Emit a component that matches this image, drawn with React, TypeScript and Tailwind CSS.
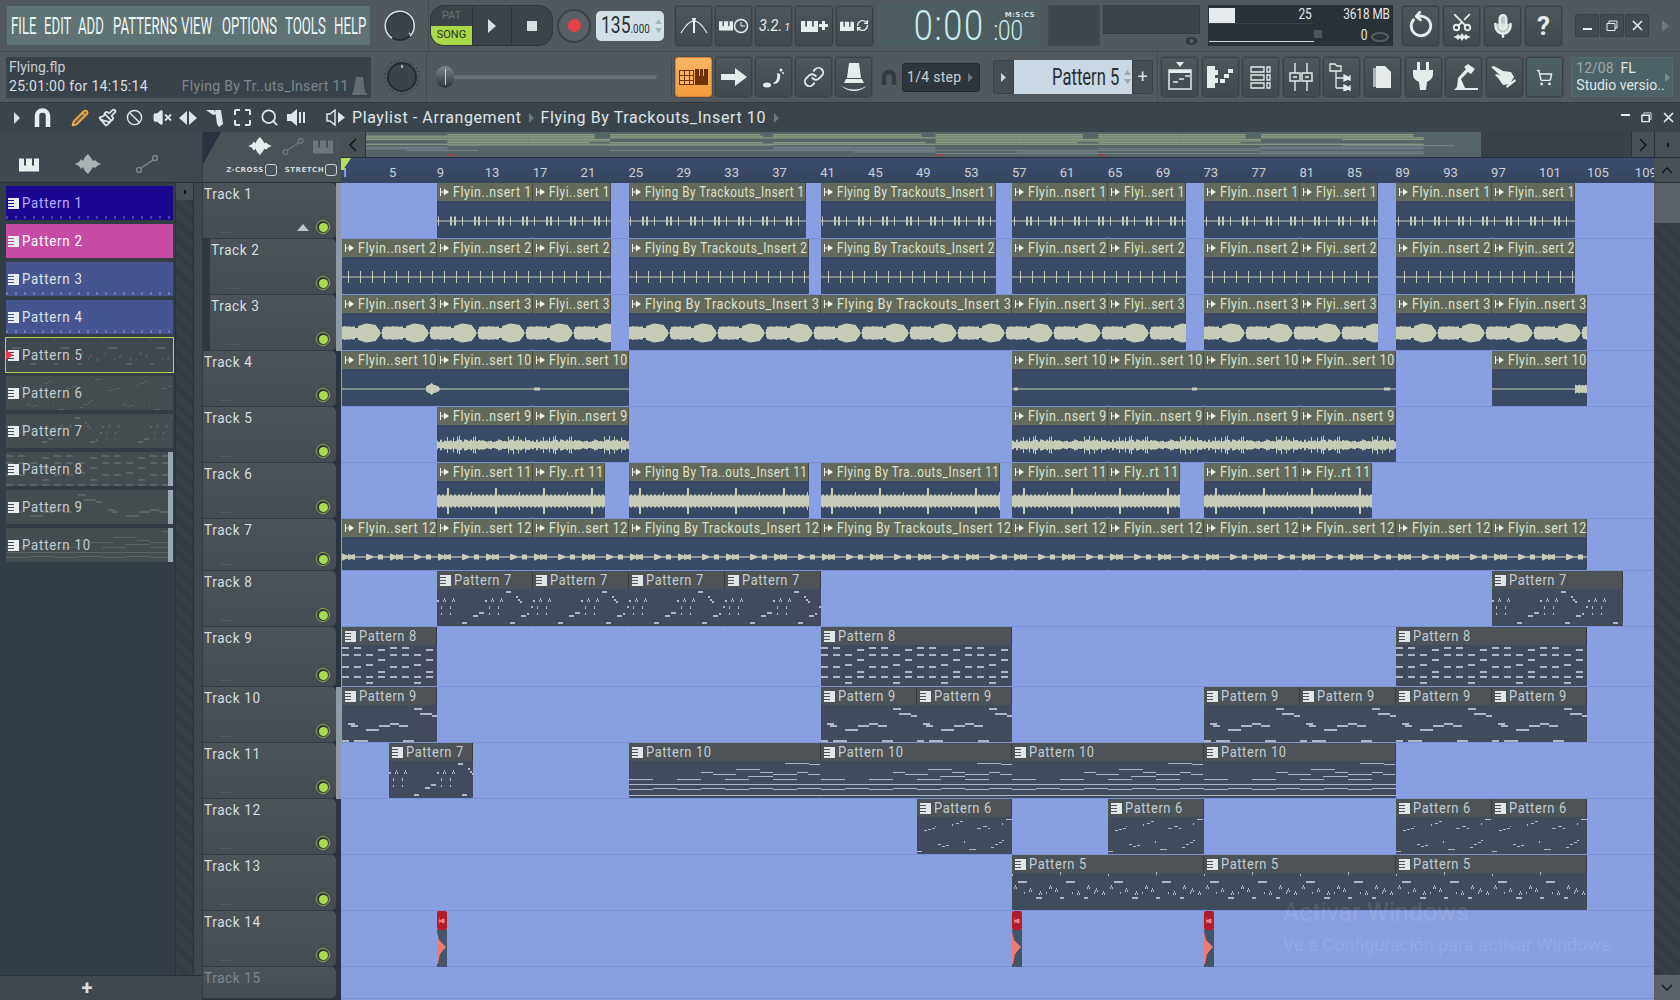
import React from "react";
import { Ban, Link, Mic, Paintbrush, Pencil, RefreshCw, RotateCcw, Scissors, Search, ShoppingCart, VolumeX } from "lucide-react";

const BAR = 11.98;

type Clip = [number, number, string];
const a = (label: string, ...spans: number[][]): Clip[] => spans.map(([s, e]) => [s, e, label] as Clip);

const n1 = "Flyin..nsert 1", s1 = "Flyi..sert 1";
const n2 = "Flyin..nsert 2", s2 = "Flyi..sert 2";
const n3 = "Flyin..nsert 3", s3 = "Flyi..sert 3";
const n10 = "Flyin..sert 10", n9 = "Flyin..nsert 9", n11 = "Flyin..sert 11", f11 = "Fly..rt 11", n12 = "Flyin..sert 12";

const audioRows: Clip[][] = [
  [...a(n1, [8, 16]), ...a(s1, [16, 22.5]), ...a("Flying By Trackouts_Insert 1", [24, 38.75], [40, 54.6]), ...a(n1, [56, 64]), ...a(s1, [64, 70.5]), ...a(n1, [72, 80]), ...a(s1, [80, 86.5]), ...a(n1, [88, 96]), ...a("Flyin..sert 1", [96, 103])],
  [...a(n2, [0, 8], [8, 16]), ...a(s2, [16, 22.5]), ...a("Flying By Trackouts_Insert 2", [24, 39], [40, 54.6]), ...a(n2, [56, 64]), ...a(s2, [64, 70.5]), ...a(n2, [72, 80]), ...a(s2, [80, 86.5]), ...a(n2, [88, 96]), ...a("Flyin..sert 2", [96, 103])],
  [...a(n3, [0, 8], [8, 16]), ...a(s3, [16, 22.5]), ...a("Flying By Trackouts_Insert 3", [24, 40], [40, 56]), ...a(n3, [56, 64]), ...a(s3, [64, 70.5]), ...a(n3, [72, 80]), ...a(s3, [80, 86.5]), ...a(n3, [88, 96], [96, 104])],
  a(n10, [0, 8], [8, 16], [16, 24], [56, 64], [64, 72], [72, 80], [80, 88], [96, 104]),
  a(n9, [8, 16], [16, 24], [56, 64], [64, 72], [72, 80], [80, 88]),
  [...a(n11, [8, 16]), ...a(f11, [16, 22]), ...a("Flying By Tra..outs_Insert 11", [24, 39], [40, 55]), ...a(n11, [56, 64]), ...a(f11, [64, 70]), ...a(n11, [72, 80]), ...a(f11, [80, 86])],
  [...a(n12, [0, 8], [8, 16], [16, 24]), ...a("Flying By Trackouts_Insert 12", [24, 40], [40, 56]), ...a(n12, [56, 64], [64, 72], [72, 80], [80, 88], [88, 96], [96, 104])],
];

const patternRows: Clip[][] = [
  a("Pattern 7", [8, 16], [16, 24], [24, 32], [32, 40], [96, 107]),
  a("Pattern 8", [0, 8], [40, 56], [88, 104]),
  a("Pattern 9", [0, 8], [40, 48], [48, 56], [72, 80], [80, 88], [88, 96], [96, 104]),
  [...a("Pattern 7", [4, 11]), ...a("Pattern 10", [24, 40], [40, 56], [56, 72], [72, 88])],
  a("Pattern 6", [48, 56], [64, 72], [88, 96], [96, 104]),
  a("Pattern 5", [56, 72], [72, 88], [88, 104]),
];

const rowHeights = [56, 56, 56, 56, 56, 56, 52, 56, 60, 56, 56, 56, 56, 56, 32];

// FL squeezes the clip title to fit the clip
const ctx = document.createElement("canvas").getContext("2d");
const fitScale = (text: string, clipW: number) => {
  if (!ctx) return 0.8;
  ctx.font = "15px Roboto";
  const natural = ctx.measureText(text).width + text.length * 0.7;
  return Math.min(0.86, (clipW - 17) / natural);
};

// noise that stays the same between renders
const noise = (i: number) => {
  const v = Math.sin(i * 12.9898) * 43758.5453;
  return v - Math.floor(v);
};

const amp = (track: number, x: number): number => {
  const m = (t: number) => ((x % t) + t) % t;
  switch (track) {
    case 0: {
      const t = m(24);
      if (t < 1 || (t >= 12 && t < 14) || (t >= 16 && t < 18)) return 4.5;
      return 0.5;
    }
    case 1: {
      const t = m(12);
      return t >= 6 && t < 7 ? 6 : 0.5;
    }
    case 2: {
      const t = m(48) - 14;
      const p = t < 0 ? t + 48 : t;
      if (p < 24) return p < 2 ? 5 : p < 10 ? 7 + (p - 2) * 0.35 : p < 19 ? 9.5 - (p - 10) * 0.15 : 8 - (p - 19) * 1.3;
      if (p < 25.5) return 0.6;
      return p < 27 ? 4 : p > 46 ? 5 : 6 + noise(Math.floor(p)) * 0.8;
    }
    case 3: {
      if (x >= 84 && x < 99) return Math.max(0.5, 5 - Math.abs(x - 89) * 0.5 + noise(x));
      if ((x >= 192 && x < 198) || (x >= 1042 && x < 1048) || (x >= 850 && x < 855) || (x >= 672 && x < 676)) return 1.5;
      if (x >= 1233 && x < 1246) return 3.5 + noise(x);
      return 0.5;
    }
    case 4: {
      const t = m(96);
      return 3 + noise(Math.floor(t / 2)) * 2.5 + (noise(t + 300) > 0.9 ? 4 : 0);
    }
    case 5: {
      const t = m(48);
      if (t >= 9 && t < 11) return 13;
      if (t >= 33 && t < 34) return 9;
      return m(4) < 2 ? 6.5 : 5.5;
    }
    default: {
      const t = m(48);
      if (t < 6) return 3.5 - t * 0.4;
      if (t >= 6 && t < 13) return 2 + Math.abs(t - 9) * 0.3;
      if (t >= 24 && t < 31) return 3.2 - (t - 24) * 0.35;
      if (t >= 36 && t < 41) return 2.5;
      return 0.6;
    }
  }
};

const Wave = ({ track, x0, w }: { track: number; x0: number; w: number }) => {
  let d = "";
  for (let i = 0; i < w; i++) {
    const v = amp(track, Math.floor(x0 + i));
    d += `M${i + 0.5} ${19 - v}V${19 + v}`;
  }
  return (
    <svg className="absolute left-0 top-[19px]" width={w} height={37}>
      <path d={d} stroke="#c6ccb8" strokeWidth={1} fill="none" />
    </svg>
  );
};

type N = number[];
const rep = (xs: number[], y: number, wd = 7, h = 2): N[] => xs.map((x) => [x, y, wd, h]);
const tiles: Record<string, { tile: number; notes: N[] }> = {
  "Pattern 7": {
    tile: 96,
    notes: [
      [69, 3, 5, 2], [79, 8, 2, 2], [81, 11, 2, 2], [83, 13, 2, 2], [25, 34, 5, 2], [73, 34, 5, 2], [36, 27, 5, 2], [42, 24, 5, 2],
      [84, 27, 5, 2], [90, 25, 2, 2], [94, 18, 2, 2], [0, 12, 2, 2], [48, 12, 2, 2],
      ...[7, 16, 55, 64].flatMap((x) => [[x, 10, 1, 2], [x - 1, 12, 1, 2], [x + 1, 12, 1, 2]]),
      ...[4, 13, 52, 61].flatMap((x) => [[x, 18, 1, 3], [x, 25, 1, 2]]),
    ],
  },
  "Pattern 8": {
    tile: 48,
    notes: [
      ...rep([0, 12], 3), ...rep([36], 5), ...rep([0, 12, 24], 10), ...rep([36], 15), ...rep([24], 20), ...rep([0, 12], 22),
      ...rep([36], 27), ...rep([0, 12, 24, 36], 32), ...rep([24], 38),
    ],
  },
  "Pattern 9": {
    tile: 96,
    notes: [
      [72, 4, 8, 2], [78, 9, 12, 2], [90, 11, 6, 2], [6, 19, 7, 2], [9, 21, 7, 2], [24, 25, 13, 2], [37, 21, 11, 2], [48, 19, 9, 2], [57, 21, 9, 2],
      [0, 36, 7, 2], [12, 36, 14, 2], [61, 36, 11, 2],
    ],
  },
  "Pattern 10": {
    tile: 192,
    notes: [
      [0, 19, 24, 1], [48, 19, 24, 1], [96, 19, 24, 1], [144, 19, 24, 1], [0, 24, 192, 1], [0, 29, 24, 1], [24, 28, 24, 1], [48, 29, 24, 1], [72, 28, 24, 1],
      [96, 29, 24, 1], [120, 28, 24, 1], [144, 29, 24, 1], [168, 28, 24, 1], [0, 35, 192, 1], [72, 12, 12, 1], [84, 14, 23, 1], [107, 9, 24, 1], [131, 12, 13, 1],
      [144, 14, 24, 1], [168, 12, 11, 1], [179, 14, 12, 1], [156, 3, 24, 1], [180, 4, 11, 1], [119, 16, 25, 1],
    ],
  },
  "Pattern 6": {
    tile: 96,
    notes: [
      [7, 14, 3, 1], [11, 13, 3, 1], [15, 12, 3, 1], [18, 10, 1, 1], [35, 8, 1, 2], [39, 7, 3, 1], [43, 5, 3, 1], [60, 12, 4, 1], [66, 10, 4, 1], [71, 12, 2, 1],
      [89, 3, 6, 1], [85, 7, 1, 2], [21, 28, 3, 1], [25, 30, 3, 1], [29, 29, 3, 1], [47, 25, 1, 2], [52, 33, 7, 1], [74, 31, 3, 1], [78, 28, 3, 1], [82, 26, 3, 1], [85, 24, 2, 1], [0, 35, 5, 1],
    ],
  },
  "Pattern 5": {
    tile: 96,
    notes: [
      [6, 9, 9, 2], [54, 9, 9, 2], [24, 25, 6, 2], [48, 25, 4, 2], [72, 25, 4, 2], [48, 0, 1, 3], [0, 2, 1, 2],
      ...[3, 18, 28, 38, 44, 66, 76, 84, 91].flatMap((x, i) => [[x, 13 + (i % 3) * 3, 1, 2], [x + 1, 15 + (i % 3) * 3, 1, 2], [x - 1, 15 + (i % 3) * 3, 1, 2]]),
      ...[12, 34, 60, 82].map((x) => [x, 20, 1, 2]),
    ],
  },
};

const Notes = ({ name, w, h, color = "#aeb7c2" }: { name: string; w: number; h: number; color?: string }) => {
  const t = tiles[name];
  let d = "";
  for (let o = 0; o < w; o += t.tile) {
    for (const [x, y, nw, nh] of t.notes) {
      if (x + o < w) d += `M${x + o} ${y}h${nw}v${nh}h${-nw}z`;
    }
  }
  return (
    <svg className="absolute left-0 bottom-0" width={w} height={h}>
      <path d={d} fill={color} />
    </svg>
  );
};

const AudioGlyph = () => (
  <svg width={10} height={8} className="shrink-0" viewBox="0 0 10 8">
    <path d="M0 0h1v8H0zM1 3.500h3v1H1zM4 0.500l5 3.500-5 3.500z" fill="#f0f2e4" />
  </svg>
);

const PatGlyph = ({ color = "#dfe5e8", size = 11 }: { color?: string; size?: number }) => (
  <svg width={size} height={size} className="shrink-0" viewBox="0 0 11 11">
    <path d="M0 0h11v11H0V9h6V8H0V6h6V5H0V3h6V2H0z" fill={color} />
  </svg>
);

const Piano = ({ w = 20, h = 14, color = "#e8eeee" }: { w?: number; h?: number; color?: string }) => (
  <svg width={w} height={h} viewBox="0 0 20 14">
    <path d="M0 1h5v7h2V1h6v7h2V1h5v13H0z" fill={color} />
  </svg>
);

const TimelineClip = ({ clip, track, isPattern }: { clip: Clip; track: number; isPattern: boolean }) => {
  const [s, e, text] = clip;
  const left = s * BAR + 0.5;
  const w = (e - s) * BAR;
  return (
    <div className={`absolute top-0 bottom-0 overflow-hidden rounded-[1px] ${isPattern ? "bg-[#404c5d]" : "bg-[#394a66]"}`} style={{ left, width: w }}>
      <div className={`flex h-[18px] items-center gap-[3px] border-r border-black/30 pl-[3px] ${isPattern ? "bg-[#4d5357] text-[#c5cdd2]" : "bg-[#646a5b] text-[#dde1cd]"}`}>
        {isPattern ? <PatGlyph /> : <AudioGlyph />}
        <span
          className="inline-block w-0 origin-left whitespace-nowrap text-[15px] leading-none tracking-[0.7px]"
          style={{ transform: `scaleX(${isPattern ? 0.86 : fitScale(text, w)})` }}
        >
          {text}
        </span>
      </div>
      {isPattern ? <Notes name={text} w={w} h={rowHeights[track] - 18} /> : <Wave track={track} x0={s * BAR} w={w} />}
    </div>
  );
};

const RedMarker = ({ at }: { at: number }) => (
  <div className="absolute top-0 bottom-0 w-[10px]" style={{ left: at * BAR + 0.5 }}>
    <div className="flex h-[19px] items-center justify-center rounded-[2px] bg-[#b41c28]">
      <svg width={6} height={6} viewBox="0 0 6 6"><path d="M0 0v6M0 3l5-2v4z" stroke="#e88" fill="#e88" /></svg>
    </div>
    <div className="h-[37px] bg-[#46566a]">
      <svg width={10} height={37} viewBox="0 0 10 37"><path d="M0 2L2 10 9 17 3 24 1 34 0 34z" fill="#ee7a72" /></svg>
    </div>
  </div>
);

const Btn = ({ children, className = "" }: { children?: React.ReactNode; className?: string }) => (
  <div className={`flex h-[40px] w-[37px] shrink-0 items-center justify-center rounded-[3px] border border-[#3a4146] bg-gradient-to-b from-[#4e565b] to-[#42494e] shadow-[0_0_0_1px_rgba(0,0,0,0.12)] ${className}`}>
    {children}
  </div>
);

const WinBtn = ({ children }: { children: React.ReactNode }) => (
  <div className="flex h-[23px] w-[24px] items-center justify-center rounded-[3px] bg-[#434a4f] text-[#e8eeee] shadow-[inset_0_0_0_1px_#393f44]">{children}</div>
);

const Knob = ({ size = 30, ring = false }: { size?: number; ring?: boolean }) => (
  <svg width={size + 6} height={size + 6} viewBox="0 0 36 36">
    {ring ? <circle cx={18} cy={18} r={17} fill="none" stroke="#33393e" strokeWidth={1.5} strokeDasharray="1 3" /> : null}
    <circle cx={18} cy={18} r={14} fill="#3b4248" stroke="#262b2f" strokeWidth={2} />
    {!ring ? <path d="M28 28A14.5 14.5 0 1 0 10 30" fill="none" stroke="#d9e0e2" strokeWidth={1.6} /> : null}
    <path d={ring ? "M18 6v3" : "M27 25l1 1"} stroke="#cfd6d8" strokeWidth={1.5} />
  </svg>
);

const S = ({ children, w = 30, h = 28 }: { children: React.ReactNode; w?: number; h?: number }) => (
  <svg width={w} height={h} viewBox={`0 0 ${w} ${h}`} fill="none" stroke="none">{children}</svg>
);

const ic = "#e6ecec";

const menu: [string, number][] = [["FILE", 33.5], ["EDIT", 34], ["ADD", 35], ["PATTERNS", 68], ["VIEW", 41], ["OPTIONS", 63], ["TOOLS", 49], ["HELP", 36]];

const TopToolbar = () => (
  <div className="h-[102px] shrink-0 bg-[#52595e] font-['Roboto',sans-serif]">
    {/* first row */}
    <div className="flex h-[52px] items-center border-b border-[#464d52]">
      <div className="ml-[6px] flex h-[41px] w-[365px] items-center overflow-hidden border border-[#4c5a5c] bg-[#5f7274] pl-[3.5px] text-[#eaf6f3]">
        {menu.map(([t, wd]) => (
          <span key={t} className="inline-block whitespace-nowrap text-[24px] leading-none" style={{ width: wd }}>
            <span className="inline-block w-0 origin-left scale-x-[0.55]">{t}</span>
          </span>
        ))}
      </div>
      <div className="ml-[11px] flex w-[43px] shrink-0 items-center">
        <Knob />
      </div>
      <div className="ml-[3px] flex h-[51px] items-center border-l border-[#464d52] pl-[1px]">
        <div className="flex h-[41px] w-[123px] overflow-hidden rounded-[14px] border border-[#30363a] bg-[#3c4349]">
          <div className="flex w-[42px] flex-col items-center border-r border-[#2f3539]">
            <span className="flex h-[21px] items-center text-[11px] text-[#666f72]">PAT</span>
            <span className="flex h-[20px] w-full items-center justify-center bg-[#a9d848] text-[11px] text-[#2a3320]">SONG</span>
          </div>
          <div className="flex w-[39px] items-center justify-center border-r border-[#2f3539]">
            <svg width={8} height={14} viewBox="0 0 8 14"><path d="M0 0l8 7-8 7z" fill="#d9dfe0" /></svg>
          </div>
          <div className="flex flex-1 items-center justify-center">
            <div className="h-[10px] w-[10px] bg-[#d9dfe0]" />
          </div>
        </div>
        <div className="ml-[4px] flex h-[34px] w-[34px] items-center justify-center rounded-full border-2 border-[#3c4348] bg-[#596065]">
          <div className="h-[13px] w-[13px] rounded-full bg-[#e8404a]" />
        </div>
        <div className="ml-[5px] flex h-[30px] w-[68px] items-center justify-between rounded-[5px] bg-[#d3dfe6] pl-[5px] pr-[2px] text-[#2a3238]">
          <span className="inline-block w-[54px] origin-left scale-x-[0.76] whitespace-nowrap text-[23px] leading-none">135<span className="text-[13px]">.000</span></span>
          <svg width={7} height={18} viewBox="0 0 7 18"><path d="M3.500 2L7 7H0zM3.500 16L0 11h7z" fill="#a7b4bc" /></svg>
        </div>
      </div>
      <div className="ml-[11px] flex gap-[3px]">
        <Btn>
          <S>
            <path d="M2 21Q9 9 15 9T28 21" stroke={ic} strokeWidth={1.2} />
            <path d="M13 6h4l-1 5v10h-2V11z" fill={ic} />
          </S>
        </Btn>
        <Btn>
          <div className="flex items-center">
            <Piano w={14} h={11} />
            <svg width={16} height={16} viewBox="0 0 16 16" fill="none"><circle cx={8} cy={8} r={6.500} stroke={ic} strokeWidth={1.5} /><path d="M8 4v4h4" stroke={ic} /></svg>
          </div>
        </Btn>
        <Btn>
          <span className="text-[17px] italic leading-none text-[#e6ecec]"><span className="inline-block scale-x-[0.85]">3.2.</span><span className="text-[10px]">1</span></span>
        </Btn>
        <Btn className="w-[38px]">
          <div className="flex items-center gap-[1px]">
            <Piano w={17} h={14} />
            <svg width={9} height={9} viewBox="0 0 9 9"><path d="M3 0h3v3h3v3H6v3H3V6H0V3h3z" fill={ic} /></svg>
          </div>
        </Btn>
        <Btn>
          <div className="flex items-center gap-[2px]">
            <Piano w={14} h={10} />
            <RefreshCw size={13} strokeWidth={2.5} color={ic} />
          </div>
        </Btn>
      </div>
      <div className="relative ml-[5px] flex h-[41px] w-[161px] items-center justify-end border border-[#4f5e60] bg-[#4c5d5f] pr-[16px] font-light text-[#cbedf1]">
        <span className="mr-[37px] inline-block origin-right scale-x-[0.8] whitespace-nowrap text-[43px] leading-none tracking-[2px]">0:00</span>
        <span className="absolute bottom-[3px] right-[15px] inline-block origin-right scale-x-[0.8] whitespace-nowrap text-[28px] leading-[22px]">:00</span>
        <span className="absolute right-[3px] top-[5px] font-['DejaVu_Sans',sans-serif] text-[7px] font-bold leading-[8px] tracking-[0.4px] text-[#cfe0e2]">M:S:CS</span>
      </div>
      <div className="ml-[9px] h-[41px] w-[52px] border border-[#464d52] bg-[#3f474c]" />
      <div className="relative ml-[3px] h-[41px] w-[97px]">
        <div className="h-[29px] border border-[#363c41] bg-[#3c444a]" />
        <svg className="absolute right-[1px] bottom-[0px]" width={15} height={10} viewBox="0 0 15 10"><ellipse cx={7.500} cy={5} rx={6} ry={4} fill="#33393e" /><circle cx={7.500} cy={5} r={2} fill="#5a6267" /></svg>
      </div>
      <div className="ml-[8px] flex h-[41px] w-[185px] bg-[#2a3137] text-[#e4e9ea]">
        <div className="relative flex w-[106px] flex-col">
          <div className="flex h-[19px] items-center justify-end border-b border-[#3a4248] pr-[2px]">
            <div className="absolute left-[1px] top-[3px] h-[15px] w-[26px] bg-[#e6ecee]" />
            <span className="inline-block text-[15px] leading-none"><span className="inline-block origin-right scale-x-[0.8]">25</span></span>
          </div>
          <div className="relative flex-1">
            <div className="absolute bottom-[4px] left-[1px] right-0 h-[1px] bg-[#cfd6d8]" />
          </div>
        </div>
        <div className="relative flex flex-1 flex-col items-end pr-[3px]">
          <span className="whitespace-nowrap text-[15px] leading-[19px]"><span className="inline-block origin-right scale-x-[0.78]">3618 MB</span></span>
          <span className="mr-[23px] text-[15px] leading-[22px]"><span className="inline-block origin-right scale-x-[0.8]">0</span></span>
          <svg className="absolute bottom-[4px] right-[4px]" width={18} height={10} viewBox="0 0 18 10"><ellipse cx={9} cy={5} rx={8} ry={4} fill="none" stroke="#555d62" strokeWidth={2} /></svg>
          <div className="absolute left-[0px] top-[25px] h-[8px] w-[8px] bg-[#4d555a]" />
        </div>
      </div>
      <div className="ml-[9px] flex gap-[4px]">
        <Btn><RotateCcw size={26} strokeWidth={2.6} color={ic} className="rotate-[40deg]" /></Btn>
        <Btn>
          <div className="relative flex flex-col items-center">
            <Scissors size={22} strokeWidth={2} color={ic} className="-rotate-90" />
            <svg width={18} height={8} viewBox="0 0 18 8"><path d="M0 4l3-1 2-2 2 2 2-3 2 3 2-2 2 2 3 1-3 1-2 2-2-2-2 3-2-3-2 2-2-2z" fill={ic} /></svg>
          </div>
        </Btn>
        <Btn><Mic size={26} strokeWidth={2.2} color={ic} fill={ic} fillOpacity={0.75} /></Btn>
        <Btn><span className="text-[26px] font-bold leading-none text-[#e6ecec]">?</span></Btn>
      </div>
      <div className="ml-[13px] flex gap-[1px]">
        <WinBtn><div className="mt-[6px] h-[2px] w-[9px] bg-[#e8eeee]" /></WinBtn>
        <WinBtn>
          <svg width={12} height={12} viewBox="0 0 12 12" fill="none" stroke="#e8eeee"><path d="M3 3V1h8v7H9" /><path d="M1 3.500h8v7H1z" /></svg>
        </WinBtn>
        <WinBtn>
          <svg width={11} height={11} viewBox="0 0 11 11" stroke="#e8eeee" strokeWidth={1.6}><path d="M1 1l9 9M10 1l-9 9" /></svg>
        </WinBtn>
      </div>
      <svg className="ml-[13px]" width={7} height={12} viewBox="0 0 7 12"><path d="M0 0l7 6-7 6z" fill="#6d767b" /></svg>
    </div>
    {/* second row */}
    <div className="flex h-[50px] items-center">
      <div className="ml-[6px] flex h-[41px] w-[365px] flex-col justify-center bg-[#3a4249] pl-[3px] pr-[3px] text-[#d9dfe2]">
        <span className="text-[14px] leading-[18px] text-[#c7ced2]">Flying.flp</span>
        <div className="flex items-center">
          <span className="whitespace-nowrap text-[14px] leading-[18px] tracking-[0.3px]">25:01:00 for 14:15:14</span>
          <span className="ml-[34px] whitespace-nowrap text-[14px] tracking-[0.3px] text-[#7c868c]">Flying By Tr..uts_Insert 11</span>
          <svg className="ml-[3px]" width={15} height={20} viewBox="0 0 15 20"><path d="M4 1h7l2 16H1z" fill="#626b70" /><path d="M0 17h15v2H0z" fill="#626b70" /></svg>
        </div>
      </div>
      <div className="ml-[9px] flex w-[43px] shrink-0 justify-center"><Knob ring /></div>
      <div className="ml-[3px] flex h-[49px] w-[244px] items-center border-l border-[#464d52] pl-[9px] pr-[13px]">
        <div className="relative h-[4px] flex-1 rounded bg-[#646f78]">
          <div className="absolute left-0 top-[-9px] h-[22px] w-[18px] rounded-full bg-gradient-to-b from-[#7d8688] to-[#2f3539]">
            <div className="mx-auto mt-[3px] h-[16px] w-[1px] bg-[#c7e85c]" />
          </div>
        </div>
      </div>
      <div className="ml-[1px] flex gap-[3px] border-l border-[#464d52] pl-[3px]">
        <Btn className="!border-[#e08030] !from-[#fbb565] !to-[#f29a3a]">
          <svg width={30} height={20} viewBox="0 0 30 20">
            <path d="M0 3h15v15H0z M16 2h4v7h1V2h3v7h1V2h4v16H16z" fill="#6e3208" fillRule="evenodd" />
            <path d="M1 4h4v4H1zM6 4h4v4H6zM11 4h3v4h-3zM1 9h4v4H1zM6 9h4v4H6zM11 9h3v4h-3zM1 14h4v3H1zM6 14h4v3H6zM11 14h3v3h-3z" fill="#fbb565" />
          </svg>
        </Btn>
        <Btn>
          <svg width={26} height={18} viewBox="0 0 26 18"><path d="M0 6h14V0l12 9-12 9v-6H0z" fill={ic} /></svg>
        </Btn>
        <Btn>
          <svg width={24} height={24} viewBox="0 0 24 24" fill={ic}><ellipse cx={5} cy={20} rx={4} ry={2.500} /><path d="M11 18c3-1 5-4 4-10l3 1c1 6-2 10-6 10z" /><circle cx={19} cy={5} r={1.500} /><circle cx={21} cy={8} r={1} /></svg>
        </Btn>
        <Btn><Link size={22} strokeWidth={2} color={ic} /></Btn>
        <Btn>
          <svg width={28} height={30} viewBox="0 0 28 30" fill={ic}><path d="M9 1h10l2 15H7z" /><path d="M6 17h16l2 4H4z" /><path d="M1 24q13 7 26 0-13 10-26 0z" /></svg>
        </Btn>
      </div>
      <svg className="ml-[9px] shrink-0" width={16} height={16} viewBox="0 0 16 16" fill="none"><path d="M3 16V8a5 5 0 0 1 10 0v8" stroke="#353c41" strokeWidth={4.500} /></svg>
      <div className="ml-[5px] flex h-[29px] w-[78px] items-center justify-between rounded-[3px] border border-[#262c30] bg-[#2f363b] pl-[4px] pr-[6px] text-[#c9d0d3]">
        <span className="whitespace-nowrap text-[14px] tracking-[0.3px]">1/4 step</span>
        <svg width={5} height={9} viewBox="0 0 5 9"><path d="M0 0l5 4.500L0 9z" fill="#6d767b" /></svg>
      </div>
      <div className="ml-[13px] flex h-[34px] items-stretch">
        <div className="flex w-[21px] items-center justify-center rounded-l-[3px] border border-[#3a4146] bg-[#474e53]">
          <svg width={5} height={9} viewBox="0 0 5 9"><path d="M0 0l5 4.500L0 9z" fill="#c9d0d3" /></svg>
        </div>
        <div className="flex w-[118px] items-center justify-end bg-[#c9d8e2] pr-[1px] text-[#262d33]">
          <span className="mr-[3px] inline-block origin-right scale-x-[0.72] whitespace-nowrap text-[23px] leading-none">Pattern 5</span>
          <svg className="ml-[2px]" width={7} height={16} viewBox="0 0 7 16"><path d="M3.500 1L7 6H0zM3.500 15L0 10h7z" fill="#9aa8b2" /></svg>
        </div>
        <div className="flex w-[21px] items-center justify-center rounded-r-[3px] border border-[#3a4146] bg-[#474e53] text-[18px] leading-none text-[#d9dfe0]">+</div>
      </div>
      <div className="ml-[4px] flex h-[50px] items-center gap-[3.6px] border-l border-[#464d52] pl-[3px]">
        <Btn>
          <svg width={24} height={30} viewBox="0 0 24 30" fill="none"><path d="M8 0h8l-4 5z" fill={ic} /><path d="M1 8h22v19H1z" stroke={ic} strokeWidth={1.5} /><path d="M5 20h5M11 17h5M17 14h5" stroke={ic} strokeWidth={1.5} /><path d="M1 8h22v3H1z" fill={ic} /></svg>
        </Btn>
        <Btn>
          <svg width={26} height={24} viewBox="0 0 26 24" fill={ic}><path d="M0 1h8v4h3v5H8v3h3v5H8v5H0z" /><path d="M13 14h5v4h-5zM17 9h5v4h-5zM21 4h5v4h-5z" /></svg>
        </Btn>
        <Btn>
          <svg width={22} height={24} viewBox="0 0 22 24" fill="none" stroke={ic} strokeWidth={1.3}><path d="M1 2h13v5H1zM1 10h13v5H1zM1 18h13v5H1zM17 2h3v5h-3zM17 10h3v5h-3zM17 18h3v5h-3z" /></svg>
        </Btn>
        <Btn>
          <svg width={24} height={28} viewBox="0 0 24 28" fill="none" stroke={ic} strokeWidth={1.4}><path d="M6 0v10M6 18v10M18 0v10M18 18v10" /><path d="M1 10h10v8H1zM13 10h10v8H13z" /><path d="M4 14h4M16 14h4" /></svg>
        </Btn>
        <Btn>
          <svg width={26} height={28} viewBox="0 0 26 28" fill="none" stroke={ic} strokeWidth={1.3}><path d="M1 1h5l2 2h4v5H1zM7 8v17M7 15h8M7 25h8" /><path d="M15 12l6 3 -6 3zM15 22l6 3-6 3zM21 12v6M21 22v6" fill={ic} /></svg>
        </Btn>
        <Btn>
          <svg width={18} height={24} viewBox="0 0 18 24"><path d="M0 3h11v19H0z" fill="#aab2b5" /><path d="M3 1h9l6 6v16H3z" fill={ic} /></svg>
        </Btn>
        <Btn>
          <svg width={22} height={30} viewBox="0 0 22 30" fill={ic}><path d="M5 0h3v8H5zM14 0h3v8h-3zM1 8h20v4c0 5-4 7-6 8l-1 8H8l-1-8c-2-1-6-3-6-8z" /></svg>
        </Btn>
        <Btn>
          <svg width={30} height={32} viewBox="0 0 30 32" fill={ic}><path d="M19 3l7 5-4 5-3-2-7 7 4 9h13v2H5l3-3 1-9 8-9-2-2z" /></svg>
        </Btn>
        <Btn>
          <svg width={26} height={22} viewBox="0 0 26 22" fill={ic}><path d="M0 1l3-1 9 5 8 1 3 5-4 7-7 1-5-7-3-3 2-1 4 2z" /><path d="M15 20l9-7 1 2-9 7z" /></svg>
        </Btn>
        <Btn className="!from-[#4d6064] !to-[#47585c]"><ShoppingCart size={17} strokeWidth={2} color={ic} /></Btn>
      </div>
      <div className="ml-[8px] flex h-[40px] w-[102px] items-center border border-[#56696c] bg-[#4d6266] pl-[4px] text-[#dfe7e8]">
        <div className="w-[88px] overflow-hidden whitespace-nowrap text-[14px] leading-[17px]">
          <span className="text-[#9aa8aa]">12/08</span>&nbsp; FL<br />Studio versio..
        </div>
        <svg className="ml-[1px]" width={5} height={9} viewBox="0 0 5 9"><path d="M0 0l5 4.500L0 9z" fill="#7c8c90" /></svg>
      </div>
    </div>
  </div>
);

const TitleBar = () => (
  <div className="relative flex h-[30px] shrink-0 items-center border-t border-[#33393e] bg-[#3b444b] font-['Roboto',sans-serif] text-[#dfe5e8]">
    <svg className="ml-[14px]" width={6} height={12} viewBox="0 0 6 12"><path d="M0 0l6 6-6 6z" fill="#d9dfe0" /></svg>
    <svg className="ml-[14px]" width={17} height={19} viewBox="0 0 17 19" fill="none"><path d="M3 19V8a5.500 5.500 0 0 1 11 0v11" stroke="#e8eeee" strokeWidth={4.500} /></svg>
    <Pencil className="ml-[20px]" size={18} strokeWidth={2.2} color="#f2b04a" fill="#f2b04a" fillOpacity={0.3} />
    <Paintbrush className="ml-[9px]" size={19} strokeWidth={2.2} color="#dfe5e8" />
    <Ban className="ml-[9px]" size={17} strokeWidth={2} color="#dfe5e8" />
    <VolumeX className="ml-[10px]" size={19} strokeWidth={2.5} color="#dfe5e8" fill="#dfe5e8" />
    <svg className="ml-[7px]" width={18} height={14} viewBox="0 0 18 14"><path d="M8 0v14L0 7zM10 0l8 7-8 7z" fill="#dfe5e8" /></svg>
    <svg className="ml-[9px]" width={18} height={20} viewBox="0 0 18 20"><path d="M0 2l8 0 2 4-3 1zM9 2h6l2 14-4 3-2-3z" fill="#dfe5e8" /></svg>
    <svg className="ml-[10px]" width={17} height={17} viewBox="0 0 17 17" fill="none" stroke="#dfe5e8" strokeWidth={2}><path d="M1 6V2q0-1 1-1h4M11 1h4q1 0 1 1v4M16 11v4q0 1-1 1h-4M6 16H2q-1 0-1-1v-4" /></svg>
    <Search className="ml-[9px]" size={19} strokeWidth={2.2} color="#dfe5e8" />
    <svg className="ml-[8px]" width={18} height={17} viewBox="0 0 18 17"><path d="M0 5h4l6-5v17l-6-5H0zM12 3h2v11h-2zM16 3h2v11h-2z" fill="#dfe5e8" /></svg>
    <svg className="ml-[21px]" width={19} height={17} viewBox="0 0 19 17" fill="none"><path d="M1 5h3l5-4v15l-5-4H1z" stroke="#dfe5e8" strokeWidth={1.5} /><path d="M12 3l7 5.500-7 5.500z" fill="#dfe5e8" /></svg>
    <span className="ml-[7px] whitespace-nowrap text-[16px] tracking-[0.6px]">Playlist - Arrangement</span>
    <svg className="ml-[7px]" width={5} height={10} viewBox="0 0 5 10"><path d="M0 0l5 5-5 5z" fill="#6d767b" /></svg>
    <span className="ml-[7px] whitespace-nowrap text-[16px] tracking-[0.6px]">Flying By Trackouts_Insert 10</span>
    <svg className="ml-[8px]" width={5} height={10} viewBox="0 0 5 10"><path d="M0 0l5 5-5 5z" fill="#6d767b" /></svg>
    <div className="ml-auto mr-[6px] flex items-center gap-[11px]">
      <div className="mb-[6px] h-[2px] w-[9px] bg-[#e8eeee]" />
      <svg width={11} height={11} viewBox="0 0 12 12" fill="none" stroke="#e8eeee"><path d="M3 3V1h8v7H9" /><path d="M1 3.500h8v7H1z" strokeWidth={1.6} /></svg>
      <svg width={11} height={11} viewBox="0 0 11 11" stroke="#e8eeee" strokeWidth={1.6}><path d="M1 1l9 9M10 1l-9 9" /></svg>
    </div>
  </div>
);

const pickerStyles = [
  "bg-[#1b068f] text-[#b9aeff]",
  "bg-[#c74aa4] text-white",
  "bg-[#44558f] text-[#dfe5e8]",
  "bg-[#44558f] text-[#dfe5e8]",
  "bg-[#40484d] text-[#c5cdd2] outline outline-1 outline-[#b1d35c]",
  "bg-[#444c50] text-[#c5cdd2]",
  "bg-[#444c50] text-[#c5cdd2]",
  "bg-[#444c50] text-[#c5cdd2]",
  "bg-[#444c50] text-[#c5cdd2]",
  "bg-[#444c50] text-[#c5cdd2]",
];

const Picker = () => (
  <div className="flex w-[202px] shrink-0 flex-col font-['Roboto',sans-serif]">
    <div className="flex h-[51px] shrink-0 items-center border-b border-[#2a3136] bg-[#3f484f] pt-[14px]">
      <div className="ml-[19px]"><Piano w={20} h={15} /></div>
      <svg className="ml-[36px]" width={26} height={20} viewBox="0 0 26 20"><path d="M0 10l4-2 2-3 2 2 2-4 3-3 3 4 2 3 2-1 2 2 4 2-4 2-2 2-2-1-2 3-3 4-3-3-2-4-2 2-2-3z" fill="#aab2b5" /></svg>
      <svg className="ml-[35px]" width={22} height={18} viewBox="0 0 22 18" fill="none" stroke="#7c868c" strokeWidth={1.5}><circle cx={3} cy={15} r={2.500} /><circle cx={19} cy={3} r={2.500} /><path d="M5 13L17 5" /></svg>
    </div>
    <div className="flex min-h-0 flex-1 bg-[#333d45]">
      <div className="flex w-[175px] shrink-0 flex-col gap-[4px] py-[3px] pl-[6px] pr-[2px]">
        {Array.from({ length: 10 }, (_, i) => {
          const name = `Pattern ${i + 1}`;
          const withNotes = tiles[name];
          return (
            <div key={name} className={`relative flex h-[34px] items-center overflow-hidden pl-[2px] ${pickerStyles[i]}`}>
              {withNotes ? <Notes name={name} w={166} h={34} color="rgba(255,255,255,0.13)" /> : null}
              {i < 4 && i !== 1 ? (
                <div className="absolute bottom-[1px] left-0 right-0 h-[3px] bg-[repeating-linear-gradient(90deg,rgba(255,255,255,0.22)_0_2px,transparent_2px_9px)]" />
              ) : null}
              {i >= 7 ? <div className="absolute bottom-0 right-0 top-0 w-[5px] bg-[#9aa8b4]" /> : null}
              {i === 4 ? <svg className="absolute left-[-3px]" width={10} height={14} viewBox="0 0 10 14"><path d="M0 0l10 7-10 7z" fill="#e8384a" /></svg> : null}
              <PatGlyph size={11} color="#e8eef0" />
              <span className="relative ml-[3px] inline-block origin-left scale-x-[0.88] whitespace-nowrap text-[15px] leading-none tracking-[0.9px]">{name}</span>
            </div>
          );
        })}
      </div>
      <div className="w-[19px] border-x border-[#2a3339] bg-[repeating-linear-gradient(45deg,#3a4349_0_1px,#2f383e_1px_2px)]">
        <div className="flex h-[17px] items-center justify-center bg-[#484f54]"><div className="h-[4px] w-[2px] bg-[#12171b]" /></div>
      </div>
      <div className="w-[8px] bg-[#3f484f]" />
    </div>
    <div className="flex h-[25px] shrink-0 items-center justify-center border-t border-[#2a3136] bg-[#3f484f] pr-[28px] text-[20px] font-bold leading-none text-[#d9dfe0]">+</div>
  </div>
);

const TrackHeaders = () => (
  <div className="flex w-[139px] shrink-0 flex-col border-l border-[#333a40] bg-[#2a3340] font-['Roboto',sans-serif]">
    <div className="relative h-[51px] shrink-0 rounded-tl-[18px] border-b border-[#2a3136] bg-[#4a5257] [clip-path:polygon(18px_0,100%_0,100%_100%,0_100%,0_32px)]">
      <div className="flex items-center justify-end gap-[9px] pr-[8px] pt-[5px]">
        <svg width={26} height={18} viewBox="0 0 26 20"><path d="M0 10l4-2 2-3 2 2 2-4 3-3 3 4 2 3 2-1 2 2 4 2-4 2-2 2-2-1-2 3-3 4-3-3-2-4-2 2-2-3z" fill="#e6ecec" /></svg>
        <svg width={22} height={17} viewBox="0 0 22 18" fill="none" stroke="#6d767b" strokeWidth={1.5}><circle cx={3} cy={15} r={2.500} /><circle cx={19} cy={3} r={2.500} /><path d="M5 13L17 5" /></svg>
        <Piano w={20} h={15} color="#6d767b" />
      </div>
      <div className="mt-[9px] flex items-center justify-end pr-[4px] font-['DejaVu_Sans',sans-serif] text-[7px] font-bold tracking-[0.5px] text-[#cfd6d8]">
        <span>Z-CROSS</span>
        <div className="ml-[1px] h-[12px] w-[12px] rounded-[3px] border border-[#c9d0d3]" />
        <span className="ml-[8px]">STRETCH</span>
        <div className="ml-[1px] h-[12px] w-[12px] rounded-[3px] border border-[#c9d0d3]" />
      </div>
    </div>
    {rowHeights.map((h, i) => (
      <div key={i} className="flex shrink-0" style={{ height: h }}>
        <div className={`relative flex w-[134px] flex-col rounded-r-[5px] border-b border-[#343c42] bg-gradient-to-b from-[#4b5358] to-[#454d52] ${i === 1 || i === 2 ? "border-l-[7px] border-l-[#31393f] pl-[1px]" : "pl-[1px]"}`}>
          <span className={`mt-[4px] whitespace-nowrap text-[15px] leading-[15px] tracking-[0.7px] ${i === 14 ? "text-[#7c868c]" : "text-[#d9dfe0]"}`}>
            <span className="inline-block origin-left scale-x-[0.9]">Track {i + 1}</span>
          </span>
          {i < 14 ? (
            <div className="mt-auto flex items-end justify-between pb-[4px] pl-[17px] pr-[6px]">
              <span className="text-[11px] leading-[8px] tracking-[1px] text-[#6d767b]">...</span>
              <div className="flex items-center gap-[7px]">
                {i === 0 ? <svg width={12} height={7} viewBox="0 0 12 7"><path d="M6 0l6 7H0z" fill="#bfc6c9" /></svg> : null}
                <div className="flex h-[14px] w-[14px] items-center justify-center rounded-full border border-[#8fae52] bg-[#2f363a]">
                  <div className="h-[9px] w-[9px] rounded-full bg-[#a8dc50]" />
                </div>
              </div>
            </div>
          ) : null}
        </div>
        <div className={`w-[5px] ${i === 0 || i === 1 || i === 2 || i === 9 || i === 10 ? "bg-[#8d9aa6]" : "bg-[#2a3340]"}`} />
      </div>
    ))}
  </div>
);

const Overview = () => (
  <div className="flex h-[26px] shrink-0 border-b border-[#2a3136] bg-[#3a4248]">
    <div className="flex w-[25px] items-center justify-center border-r border-[#2a3136] bg-[#485056]">
      <svg width={8} height={14} viewBox="0 0 8 14" fill="none" stroke="#111" strokeWidth={1.3}><path d="M7 1L1 7l6 6" /></svg>
    </div>
    <svg width={1115} height={25} className="shrink-0">
      <rect width={1115} height={25} fill="#566567" />
      {audioRows.map((row, i) => row.map(([s, e]) => <rect key={`${i}-${s}`} x={s * 10.17} y={2 + i * 1.6} width={(e - s) * 10.17} height={1.3} fill="#8c9a80" />))}
      {patternRows.map((row, i) => row.map(([s, e]) => <rect key={`${i}-${s}`} x={s * 10.17} y={13 + i * 1.6} width={(e - s) * 10.17} height={1.2} fill="#728088" />))}
      {[8, 56, 72].map((s) => <rect key={s} x={s * 10.17} y={22} width={8} height={2} fill="#8a4a50" />)}
    </svg>
    <div className="flex-1" />
    <div className="flex w-[24px] items-center justify-center border-x border-[#2a3136] bg-[#485056]">
      <svg width={8} height={14} viewBox="0 0 8 14" fill="none" stroke="#111" strokeWidth={1.3}><path d="M1 1l6 6-6 6" /></svg>
    </div>
    <div className="flex w-[25px] items-center justify-center bg-[#485056]"><div className="h-[4px] w-[2px] bg-[#12171b]" /></div>
  </div>
);

const Ruler = () => {
  const marks = Array.from({ length: 28 }, (_, i) => 1 + i * 4);
  return (
    <div className="relative h-[25px] shrink-0 overflow-hidden bg-gradient-to-b from-[#3c4b6d] to-[#35455f] text-[13px] leading-[25px] text-[#c9d0d8]">
      {marks.map((m) => (
        <span key={m} className="absolute top-[2px]" style={{ left: (m - 1) * BAR }}>{m}</span>
      ))}
      <svg className="absolute left-0 top-0" width={10} height={14} viewBox="0 0 10 14"><path d="M0 0h10l-8 12H0z" fill="#b7e05c" /></svg>
    </div>
  );
};

const Rows = () => (
  <div className="relative min-h-0 flex-1 overflow-hidden bg-[#889fe1] font-['Roboto',sans-serif]">
    {rowHeights.map((h, i) => {
      const isPattern = i >= 7 && i < 13;
      const clips = i < 7 ? audioRows[i] : isPattern ? patternRows[i - 7] : [];
      return (
        <div key={i} className="relative border-b border-[#7890d4]" style={{ height: h }}>
          {clips.map((c) => <TimelineClip key={c[0]} clip={c} track={i} isPattern={isPattern} />)}
          {i === 13 ? [8, 56, 72].map((at) => <RedMarker key={at} at={at} />) : null}
        </div>
      );
    })}
    <div className="absolute left-[942px] top-[711px] whitespace-nowrap text-[25px] text-white/10">Activar Windows</div>
    <div className="absolute left-[942px] top-[748px] whitespace-nowrap text-[18px] text-white/10">Ve a Configuración para activar Windows.</div>
  </div>
);

const Scrollbar = () => (
  <div className="flex w-[26px] shrink-0 flex-col bg-[repeating-linear-gradient(45deg,#3a4349_0_1px,#2f383e_1px_2px)]">
    <div className="flex h-[25px] items-center justify-center border-b border-[#2a3136] bg-[#485056]">
      <svg width={12} height={8} viewBox="0 0 12 8" fill="none" stroke="#111" strokeWidth={1.3}><path d="M1 7l5-5 5 5" /></svg>
    </div>
    <div className="h-[40px] bg-[#5a6267]" />
    <div className="mt-auto flex h-[25px] items-center justify-center bg-[#5a6267]">
      <svg width={12} height={8} viewBox="0 0 12 8" fill="none" stroke="#111" strokeWidth={1.3}><path d="M1 1l5 5 5-5" /></svg>
    </div>
  </div>
);

export default function App() {
  return (
    <div className="flex h-[1000px] w-[1680px] flex-col overflow-hidden bg-[#3f484f]">
      <TopToolbar />
      <TitleBar />
      <div className="flex min-h-0 flex-1">
        <Picker />
        <TrackHeaders />
        <div className="flex min-w-0 flex-1 flex-col font-['Roboto',sans-serif]">
          <Overview />
          <div className="flex min-h-0 flex-1">
            <div className="flex min-w-0 flex-1 flex-col">
              <Ruler />
              <Rows />
            </div>
            <Scrollbar />
          </div>
        </div>
      </div>
    </div>
  );
}
